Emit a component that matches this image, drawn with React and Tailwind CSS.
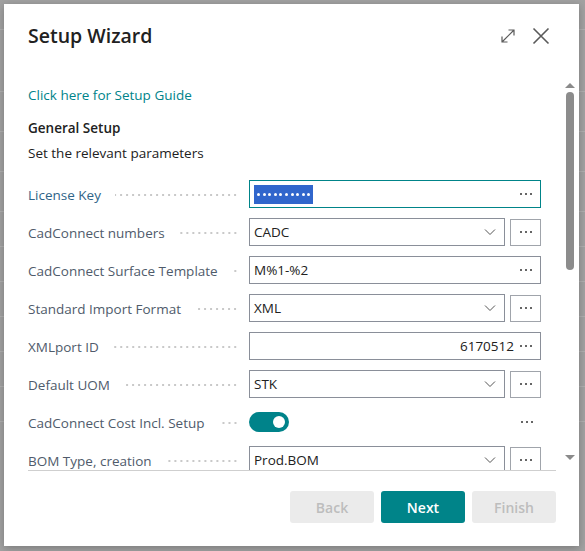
import React from "react";

const font = { fontFamily: '"Open Sans", "Noto Sans", sans-serif' };

function Dots({ className = "" }) {
  return (
    <span className={"flex items-center gap-[3px] " + className}>
      <span className="w-[2px] h-[2px] rounded-full bg-[#333]" />
      <span className="w-[2px] h-[2px] rounded-full bg-[#333]" />
      <span className="w-[2px] h-[2px] rounded-full bg-[#333]" />
    </span>
  );
}

function Chevron() {
  return (
    <svg width="12" height="8" viewBox="0 0 12 8" className="shrink-0">
      <path d="M1 1.5 L6 6.5 L11 1.5" fill="none" stroke="#555" strokeWidth="1" />
    </svg>
  );
}

function Label({ text, color = "text-[#4f5b6b]" }) {
  return (
    <div className="w-[210px] shrink-0 flex items-center overflow-hidden">
      <span className={"whitespace-nowrap text-[13.5px] leading-[20px] mt-[1px] " + color}>{text}</span>
      <span className="flex-1 ml-[14px] mt-[2px] h-[4px] min-w-0 bg-[radial-gradient(circle,#c9c9c9_0.9px,transparent_1.3px)] bg-[length:6px_4px] bg-repeat-x bg-right" />
    </div>
  );
}

function TextField({ value, right = false, focused = false, children }) {
  return (
    <div
      className={
        "w-[292px] h-[28px] flex items-center pl-[4px] pr-[8px] bg-white border " +
        (focused ? "border-[#008489]" : "border-[#8a8f99]")
      }
    >
      <div className={"flex-1 text-[13.5px] text-[#212121] " + (right ? "text-right pr-[6px]" : "")}>
        {children || value}
      </div>
      <Dots />
    </div>
  );
}

function SelectField({ value }) {
  return (
    <div className="flex items-center gap-[5px]">
      <div className="w-[256px] h-[28px] flex items-center pl-[4px] pr-[8px] border border-[#8a8f99] bg-white">
        <div className="flex-1 text-[13.5px] text-[#212121]">{value}</div>
        <Chevron />
      </div>
      <div className="w-[31px] h-[27px] flex items-center justify-center border border-[#a0a4ab] bg-white">
        <Dots />
      </div>
    </div>
  );
}

function Row({ label, labelColor, children }) {
  return (
    <div className="flex items-center gap-[11px] h-[28px] shrink-0">
      <Label text={label} color={labelColor} />
      {children}
    </div>
  );
}

export default function App() {
  return (
    <div className="relative w-[585px] h-[551px] bg-[#a2a2a2] overflow-hidden" style={font}>
      <div className="flex flex-col">
        <div className="h-[30px] border-b border-[#b0b0b0]" />
        <div className="h-[62px] border-b border-[#b0b0b0]" />
        <div className="h-[40px] border-b border-[#b0b0b0]" />
        <div className="h-[40px] border-b border-[#b0b0b0]" />
        <div className="h-[40px] border-b border-[#b0b0b0]" />
        <div className="h-[35px] border-b border-[#b0b0b0]" />
        <div className="h-[35px] border-b border-[#b0b0b0]" />
        <div className="h-[35px] border-b border-[#b0b0b0]" />
        <div className="h-[35px] border-b border-[#b0b0b0]" />
        <div className="h-[35px] border-b border-[#b0b0b0]" />
        <div className="h-[35px] border-b border-[#b0b0b0]" />
      </div>

      <div className="absolute left-[4px] top-[4px] w-[575px] h-[542px] bg-white shadow-[0_2px_8px_rgba(0,0,0,0.25)] flex flex-col">
        <div className="h-[74px] shrink-0 flex items-start pl-[24px] pr-[28px] pt-[18px]">
          <div className="flex-1 text-[19.5px] leading-[28px] font-semibold text-[#212121]">Setup Wizard</div>
          <div className="flex items-center gap-[14px] mt-[4px]">
            <svg width="18" height="18" viewBox="0 0 18 18">
              <path d="M3 15 L15 3 M9.5 3 H15 V8.5 M3 9.5 V15 H8.5" fill="none" stroke="#5a5a5a" strokeWidth="1.2" />
            </svg>
            <svg width="20" height="20" viewBox="0 0 20 20">
              <path d="M2.5 2.5 L17.5 17.5 M17.5 2.5 L2.5 17.5" fill="none" stroke="#5a5a5a" strokeWidth="1.6" />
            </svg>
          </div>
        </div>

        <div className="h-[393px] shrink-0 flex">
          <div className="w-[528px] ml-[24px] h-full border-b border-[#cfcfcf] overflow-hidden flex flex-col">
            <div className="pt-[7px] text-[13.5px] leading-[20px] text-[#00838a]">Click here for Setup Guide</div>
            <div className="mt-[13px] text-[13.5px] leading-[20px] font-semibold text-[#212121]">General Setup</div>
            <div className="mt-[5px] text-[13.5px] leading-[20px] text-[#212121]">Set the relevant parameters</div>
            <div className="mt-[17px] flex flex-col gap-[10px]">
              <Row label="License Key" labelColor="text-[#2f6488]">
                <TextField focused>
                  <span className="inline-flex items-center gap-[2.6px] bg-[#3166cc] h-[19px] px-[3px] align-middle">
                    {Array.from({ length: 10 }).map((_, i) => (
                      <span key={i} className="w-[3px] h-[3px] rounded-full bg-white" />
                    ))}
                  </span>
                </TextField>
              </Row>
              <Row label="CadConnect numbers">
                <SelectField value="CADC" />
              </Row>
              <Row label="CadConnect Surface Template">
                <TextField value="M%1-%2" />
              </Row>
              <Row label="Standard Import Format">
                <SelectField value="XML" />
              </Row>
              <Row label="XMLport ID">
                <TextField value="6170512" right />
              </Row>
              <Row label="Default UOM">
                <SelectField value="STK" />
              </Row>
              <Row label="CadConnect Cost Incl. Setup">
                <div className="w-[292px] flex items-center pr-[8px]">
                  <div className="w-[40px] h-[20px] rounded-full bg-[#00838a] flex items-center justify-end pr-[4px]">
                    <span className="w-[12px] h-[12px] rounded-full bg-white" />
                  </div>
                  <div className="flex-1" />
                  <Dots />
                </div>
              </Row>
              <Row label="BOM Type, creation">
                <SelectField value="Prod.BOM" />
              </Row>
            </div>
          </div>
          <div className="ml-[7px] w-[14px] h-full flex flex-col items-center pt-[4px] pb-[10px]">
            <svg width="10" height="6" viewBox="0 0 10 6">
              <path d="M0 6 L5 1 L10 6 Z" fill="#8a8a8a" />
            </svg>
            <div className="mt-[4px] w-[8px] h-[178px] rounded-full bg-[#8c8c8c]" />
            <div className="flex-1" />
            <svg width="10" height="6" viewBox="0 0 10 6">
              <path d="M0 0 L5 5 L10 0 Z" fill="#8a8a8a" />
            </svg>
          </div>
        </div>

        <div className="flex justify-end gap-[7px] pr-[23px] pt-[20px]">
          <div className="w-[84px] h-[32px] rounded-[3px] bg-[#ebebeb] text-[#bdbdbd] text-[14px] font-semibold flex items-center justify-center">Back</div>
          <div className="w-[84px] h-[32px] rounded-[3px] bg-[#008489] text-white text-[14px] font-semibold flex items-center justify-center">Next</div>
          <div className="w-[84px] h-[32px] rounded-[3px] bg-[#ebebeb] text-[#bdbdbd] text-[14px] font-semibold flex items-center justify-center">Finish</div>
        </div>
      </div>
    </div>
  );
}
